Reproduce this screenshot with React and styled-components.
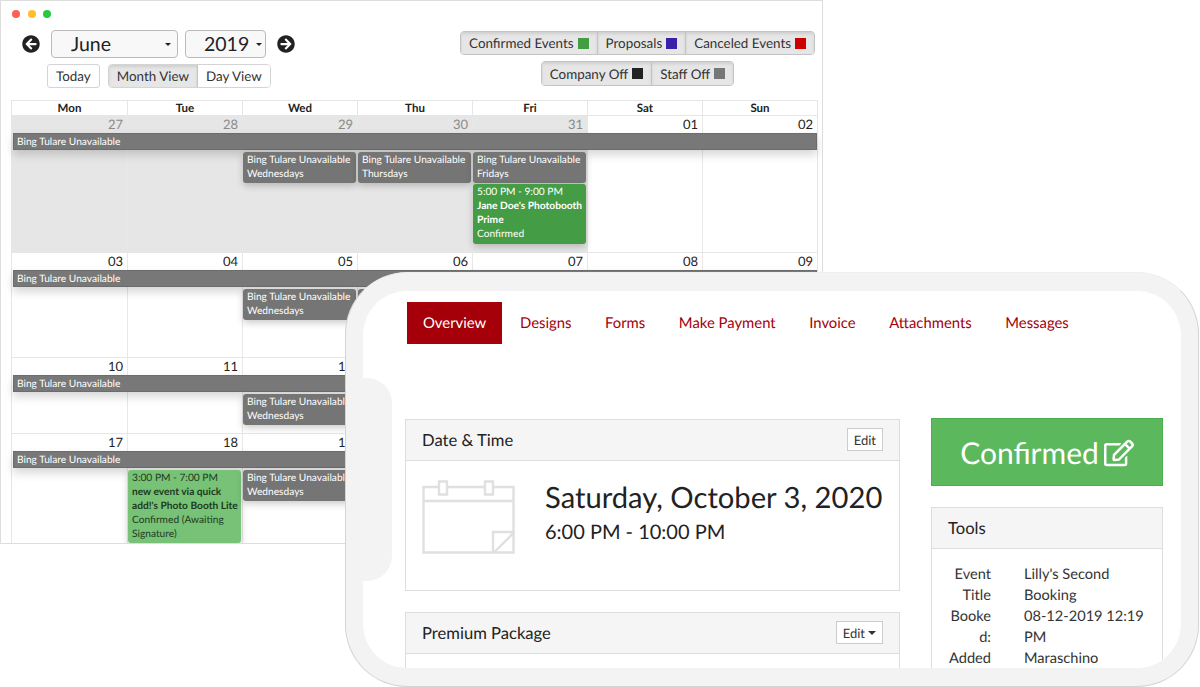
import React from 'react';
import styled, { createGlobalStyle } from 'styled-components';
import { FaArrowCircleLeft, FaArrowCircleRight, FaRegEdit } from 'react-icons/fa';

const GlobalStyle = createGlobalStyle`
  html, body { margin: 0; padding: 0; background: #fff; }
  body {
    font-family: 'Lato', 'Liberation Sans', sans-serif;
    color: #222;
    text-rendering: geometricPrecision;
  }
  * { box-sizing: border-box; }
`;

const Page = styled.div`
  position: relative;
  width: 1200px;
  height: 687px;
  overflow: hidden;
  background: #fff;
`;

const BrowserWindow = styled.div`
  width: 823px;
  height: 544px;
  border: 1px solid #ddd;
  overflow: hidden;
  background: #fff;
  padding: 9px 4px 0 10px;
`;

const Lights = styled.div`
  display: flex;
  gap: 7.7px;
  padding-left: 1px;
`;

const Light = styled.span`
  width: 8px;
  height: 8px;
  border-radius: 50%;
  background: ${p => p.$color};
`;

const Toolbar = styled.div`
  display: flex;
  justify-content: space-between;
  height: 74px;
  margin-top: 8px;
  padding: 4px 3px 0 11px;
`;

const ToolColumn = styled.div`
  display: flex;
  flex-direction: column;
  align-items: ${p => p.$align || 'flex-start'};
  gap: ${p => p.$gap}px;
  padding-top: ${p => p.$top || 0}px;
`;

const MonthRow = styled.div`
  display: flex;
  align-items: center;
  gap: 7px;
`;

const ViewRow = styled.div`
  display: flex;
  align-items: center;
  gap: 8px;
  padding-left: 25px;
`;

const ArrowButton = styled.span`
  display: flex;
  color: #222;
  font-size: 18px;
  margin: ${p => p.$margin};
`;

const Select = styled.div`
  display: flex;
  align-items: center;
  justify-content: space-between;
  width: ${p => p.$width}px;
  height: 28px;
  padding: 0 ${p => p.$right}px 0 ${p => p.$left}px;
  border: 1px solid #bbb;
  border-radius: 4px;
  background: #f8f8f8;
  font-size: 19.5px;
  color: #222;
`;

const Caret = styled.i`
  width: 0;
  height: 0;
  border-left: ${p => p.$size || 3}px solid transparent;
  border-right: ${p => p.$size || 3}px solid transparent;
  border-top: ${p => p.$size || 3}px solid currentColor;
`;

const Button = styled.div`
  display: flex;
  align-items: center;
  height: 24px;
  padding: 0 8px;
  border: 1px solid #d4d4d4;
  border-radius: 3px;
  background: #fff;
  font-size: 13.4px;
  color: #333;
`;

const Group = styled.div`
  display: flex;
  border: 1px solid ${p => p.$border || '#d4d4d4'};
  border-radius: 4px;
  overflow: hidden;
`;

const GroupItem = styled.div`
  display: flex;
  align-items: center;
  gap: 4px;
  height: ${p => p.$height || 22}px;
  padding: 0 8px;
  background: ${p => (p.$active ? '#e6e6e6' : '#fff')};
  box-shadow: ${p => (p.$active ? 'inset 0 2px 3px rgba(0,0,0,.1)' : 'none')};
  font-size: 13.4px;
  color: #333;
  & + & { border-left: 1px solid #c4c4c4; }
`;

const Swatch = styled.span`
  width: 11px;
  height: 11px;
  background: ${p => p.$color};
`;

const Calendar = styled.div`
  border: 1px solid #e6e6e6;
  border-bottom: 0;
  width: 807px;
`;

const DayHeader = styled.div`
  display: grid;
  grid-template-columns: repeat(7, 1fr);
  height: 15px;
  border-bottom: 1px solid #e6e6e6;
`;

const DayName = styled.div`
  font-size: 11.5px;
  font-weight: 700;
  line-height: 15px;
  text-align: center;
  color: #222;
  & + & { border-left: 1px solid #e6e6e6; }
`;

const Week = styled.div`
  display: grid;
  grid-template-columns: repeat(7, 1fr);
  grid-template-rows: 17px 18px 1fr;
  height: ${p => p.$height}px;
  border-bottom: 1px solid #e6e6e6;
`;

const DayCell = styled.div`
  grid-row: 1 / -1;
  grid-column: ${p => p.$col};
  padding: 1px 4px 0 0;
  font-size: 13px;
  line-height: 15px;
  text-align: right;
  background: ${p => (p.$muted ? '#e6e6e6' : '#fff')};
  color: ${p => (p.$muted ? '#8a8a8a' : '#222')};
  border-left: ${p => (p.$col > 1 ? '1.5px solid #e8e8e8' : '0')};
`;

const Band = styled.div`
  grid-row: 2;
  grid-column: 1 / -1;
  z-index: 1;
  height: 17px;
  margin: 0 0 0 1px;
  padding-left: 3px;
  background: #787878;
  border: 1px solid #6c6c6c;
  box-shadow: 0 5px 10px rgba(0,0,0,.16);
  font-size: 10.2px;
  line-height: 16px;
  color: #fff;
`;

const EventStack = styled.div`
  grid-row: 3;
  grid-column: ${p => p.$col};
  z-index: 1;
  display: flex;
  flex-direction: column;
  gap: 1px;
  padding: 1px 1px 0 1px;
  min-width: 0;
`;

const EventCard = styled.div`
  padding: 1px 3px 2px 4px;
  border-radius: 3px;
  background: ${p => p.$bg};
  color: ${p => p.$color || '#fff'};
  font-size: 10.2px;
  line-height: 14.1px;
  box-shadow: 0 3px 7px rgba(0,0,0,.2);
  b { font-weight: 700; }
`;

const EventLine = styled.div`
  white-space: normal;
`;

const Phone = styled.div`
  position: absolute;
  z-index: 5;
  left: 345px;
  top: 272px;
  width: 854px;
  height: 415px;
  padding: 18px 17px 18px 17px;
  border: 1px solid #d4d4d4;
  border-top-color: #eee;
  border-radius: 62px;
  background: #f3f3f3;
`;

const Notch = styled.div`
  position: absolute;
  left: 17px;
  top: 105px;
  width: 29px;
  height: 203px;
  border-radius: 0 25px 25px 0;
  background: #f3f3f3;
  z-index: 2;
`;

const Screen = styled.div`
  height: 100%;
  padding: 11px 18px 0 42px;
  border-radius: 44px;
  background: #fff;
  overflow: hidden;
`;

const Tabs = styled.div`
  display: flex;
  height: 42px;
  margin: 0 0 75px 2px;
`;

const Tab = styled.div`
  display: flex;
  align-items: center;
  padding: 0 ${p => (p.$active ? 16 : 16.8)}px;
  margin-right: ${p => (p.$active ? 1 : 0)}px;
  background: ${p => (p.$active ? '#a50009' : 'transparent')};
  color: ${p => (p.$active ? '#fff' : '#a50009')};
  font-size: 14.85px;
`;

const Columns = styled.div`
  display: grid;
  grid-template-columns: 495px 232px;
  gap: 31px;
`;

const Column = styled.div`
  display: flex;
  flex-direction: column;
  gap: ${p => p.$gap}px;
  margin-top: ${p => p.$top || 0}px;
`;

const Panel = styled.div`
  border: 1px solid #ddd;
  background: #fff;
  min-height: ${p => p.$minHeight || 0}px;
`;

const PanelHead = styled.div`
  display: flex;
  align-items: center;
  justify-content: space-between;
  height: 40.5px;
  padding: 0 16px;
  border-bottom: 1px solid #ddd;
  background: #f5f5f5;
  font-size: 16.6px;
  color: #222;
`;

const EditButton = styled.div`
  display: flex;
  align-items: center;
  gap: 3px;
  height: 23px;
  padding: 0 6px;
  border: 1px solid #ccc;
  background: #fff;
  font-size: 13px;
  color: #333;
`;

const DateBody = styled.div`
  display: flex;
  gap: 30px;
  padding: 19px 16px 0;
`;

const DateIcon = styled.svg`
  flex: none;
  width: 93px;
  height: 74px;
`;

const DateTitle = styled.div`
  font-size: 29.2px;
  line-height: 36px;
  white-space: nowrap;
  color: #222;
`;

const TimeText = styled.div`
  font-size: 20px;
  line-height: 32px;
  color: #222;
`;

const StatusButton = styled.div`
  display: flex;
  align-items: center;
  justify-content: center;
  gap: 5px;
  height: 68px;
  padding-top: 1px;
  border: 1px solid #4cae4c;
  background: #5cb85c;
  color: #fff;
  font-size: 30px;
`;

const DetailGrid = styled.div`
  display: grid;
  grid-template-columns: 45px 123px;
  column-gap: 33px;
  padding: 15px 0 0 14px;
  font-size: 14.6px;
  line-height: 21px;
  color: #333;
`;

const DetailLabel = styled.div`
  text-align: right;
  word-break: break-all;
`;

const months = [
  { height: 137, days: ['27', '28', '29', '30', '31', '01', '02'], muted: 5 },
  { height: 105, days: ['03', '04', '05', '06', '07', '08', '09'] },
  { height: 76, days: ['10', '11', '12', '13', '14', '15', '16'] },
  { height: 110, days: ['17', '18', '19', '20', '21', '22', '23'] },
];

const Unavailable = ({ day }) => (
  <EventCard $bg="#757575">
    <EventLine>Bing Tulare Unavailable</EventLine>
    <EventLine>{day}</EventLine>
  </EventCard>
);

const weekEvents = [
  [
    { col: 3, items: [<Unavailable key="w" day="Wednesdays" />] },
    { col: 4, items: [<Unavailable key="t" day="Thursdays" />] },
    {
      col: 5,
      items: [
        <Unavailable key="f" day="Fridays" />,
        <EventCard key="j" $bg="#449d44">
          <EventLine>5:00 PM - 9:00 PM</EventLine>
          <EventLine><b>Jane Doe's Photobooth Prime</b></EventLine>
          <EventLine>Confirmed</EventLine>
        </EventCard>,
      ],
    },
  ],
  [
    { col: 3, items: [<Unavailable key="w" day="Wednesdays" />] },
    { col: 4, items: [<Unavailable key="t" day="Thursdays" />] },
  ],
  [{ col: 3, items: [<Unavailable key="w" day="Wednesdays" />] }],
  [
    {
      col: 2,
      items: [
        <EventCard key="n" $bg="#77c276" $color="#1d3a1d">
          <EventLine>3:00 PM - 7:00 PM</EventLine>
          <EventLine><b>new event via quick add!'s Photo Booth Lite</b></EventLine>
          <EventLine>Confirmed (Awaiting Signature)</EventLine>
        </EventCard>,
      ],
    },
    { col: 3, items: [<Unavailable key="w" day="Wednesdays" />] },
  ],
];

const CalendarGlyph = () => (
  <DateIcon viewBox="0 0 93 74" fill="none" stroke="#e0e0e0" strokeWidth="2.4">
    <path d="M1.5 7h90v65.5h-90z" />
    <path d="M1.5 21h90" />
    <path d="M17 1.5h8v13h-8zM63 1.5h8v13h-8z" fill="#fff" />
    <path d="M71 72.5V52h20.5v1L72 72.5" />
  </DateIcon>
);

export default function App() {
  return (
    <Page>
      <GlobalStyle />
      <BrowserWindow>
        <Lights>
          <Light $color="#ff5f57" />
          <Light $color="#febc2e" />
          <Light $color="#28c840" />
        </Lights>
        <Toolbar>
          <ToolColumn $gap={6}>
            <MonthRow>
              <ArrowButton $margin="0 4px 0 0"><FaArrowCircleLeft /></ArrowButton>
              <Select $width={127} $left={19} $right={6}>June<Caret /></Select>
              <Select $width={81} $left={18} $right={3}>2019<Caret /></Select>
              <ArrowButton $margin="0 0 0 4px"><FaArrowCircleRight /></ArrowButton>
            </MonthRow>
            <ViewRow>
              <Button>Today</Button>
              <Group>
                <GroupItem $active>Month View</GroupItem>
                <GroupItem>Day View</GroupItem>
              </Group>
            </ViewRow>
          </ToolColumn>
          <ToolColumn $align="center" $gap={6} $top={1}>
            <Group $border="#c4c4c4">
              <GroupItem $active>Confirmed Events <Swatch $color="#449d44" /></GroupItem>
              <GroupItem $active>Proposals <Swatch $color="#3a1fa8" /></GroupItem>
              <GroupItem $active>Canceled Events <Swatch $color="#cc0000" /></GroupItem>
            </Group>
            <Group $border="#c4c4c4">
              <GroupItem $active $height={23}>Company Off <Swatch $color="#222" /></GroupItem>
              <GroupItem $active $height={23}>Staff Off <Swatch $color="#777" /></GroupItem>
            </Group>
          </ToolColumn>
        </Toolbar>
        <Calendar>
          <DayHeader>
            {['Mon', 'Tue', 'Wed', 'Thu', 'Fri', 'Sat', 'Sun'].map(d => <DayName key={d}>{d}</DayName>)}
          </DayHeader>
          {months.map((week, w) => (
            <Week key={week.days[0]} $height={week.height}>
              {week.days.map((d, i) => (
                <DayCell key={d} $col={i + 1} $muted={i < (week.muted || 0)}>{d}</DayCell>
              ))}
              <Band>Bing Tulare Unavailable</Band>
              {weekEvents[w].map(s => <EventStack key={s.col} $col={s.col}>{s.items}</EventStack>)}
            </Week>
          ))}
        </Calendar>
      </BrowserWindow>

      <Phone>
        <Notch />
        <Screen>
          <Tabs>
            <Tab $active>Overview</Tab>
            <Tab>Designs</Tab>
            <Tab>Forms</Tab>
            <Tab>Make Payment</Tab>
            <Tab>Invoice</Tab>
            <Tab>Attachments</Tab>
            <Tab>Messages</Tab>
          </Tabs>
          <Columns>
            <Column $gap={21}>
              <Panel $minHeight={172}>
                <PanelHead>
                  Date &amp; Time
                  <EditButton>Edit</EditButton>
                </PanelHead>
                <DateBody>
                  <CalendarGlyph />
                  <div>
                    <DateTitle>Saturday, October 3, 2020</DateTitle>
                    <TimeText>6:00 PM - 10:00 PM</TimeText>
                  </div>
                </DateBody>
              </Panel>
              <Panel $minHeight={120}>
                <PanelHead>
                  Premium Package
                  <EditButton>Edit <Caret $size={4} /></EditButton>
                </PanelHead>
              </Panel>
            </Column>
            <Column $gap={21} $top={-1}>
              <StatusButton>Confirmed <FaRegEdit size={30} /></StatusButton>
              <Panel>
                <PanelHead>Tools</PanelHead>
                <DetailGrid>
                  <DetailLabel>Event Title</DetailLabel>
                  <div>Lilly's Second Booking</div>
                  <DetailLabel>Booked:</DetailLabel>
                  <div>08-12-2019 12:19 PM</div>
                  <DetailLabel>Added</DetailLabel>
                  <div>Maraschino</div>
                </DetailGrid>
              </Panel>
            </Column>
          </Columns>
        </Screen>
      </Phone>
    </Page>
  );
}
